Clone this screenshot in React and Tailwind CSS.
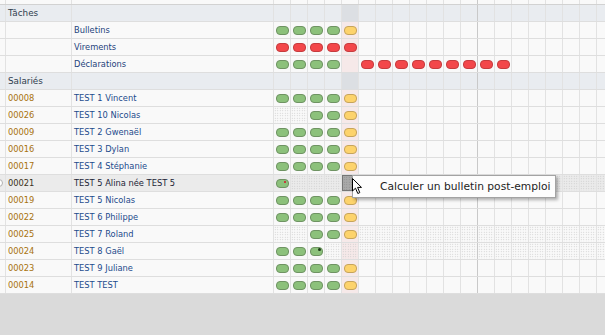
import React from "react";

const NCOL = 20;
const HL = 4;

function fill(prefix, rest) {
  const arr = [...prefix];
  while (arr.length < NCOL) arr.push(rest);
  return arr;
}

const tasks = [
  { name: "Bulletins", cells: fill(["g", "g", "g", "g", "y"], "") },
  { name: "Virements", cells: fill(["r", "r", "r", "r", "r"], "") },
  {
    name: "Déclarations",
    cells: fill(["g", "g", "g", "g", "", "r", "r", "r", "r", "r", "r", "r", "r", "r"], ""),
  },
];

const std = fill(["g", "g", "g", "g", "y"], "");
const emps = [
  { code: "00008", name: "TEST 1 Vincent", cells: std },
  { code: "00026", name: "TEST 10 Nicolas", cells: fill(["h", "h", "g", "g", "y"], "") },
  { code: "00009", name: "TEST 2 Gwenaël", cells: std },
  { code: "00016", name: "TEST 3 Dylan", cells: std },
  { code: "00017", name: "TEST 4 Stéphanie", cells: std },
  { code: "00021", name: "TEST 5 Alina née TEST 5", cells: fill(["gr", "h", "h", "h", "sel"], "h"), active: true },
  { code: "00019", name: "TEST 5 Nicolas", cells: std },
  { code: "00022", name: "TEST 6 Philippe", cells: std },
  { code: "00025", name: "TEST 7 Roland", cells: fill(["h", "h", "g", "g", "y"], "h") },
  { code: "00024", name: "TEST 8 Gaël", cells: fill(["g", "g", "gd", "h", "h"], "h") },
  { code: "00023", name: "TEST 9 Juliane", cells: std },
  { code: "00014", name: "TEST TEST", cells: std },
];

function Pill({ type }) {
  if (type === "y")
    return <div className="w-[13px] h-[9px] rounded-[4px] border border-[#c6a45c] bg-[#fdd36c]" />;
  if (type === "r")
    return <div className="w-[13px] h-[9px] rounded-[4px] border border-[#c53c3e] bg-[#f3474a]" />;
  return (
    <div className="relative w-[13px] h-[9px] rounded-[4px] border border-[#6f9363] bg-[#8cc17b]">
      {type === "gr" && <div className="absolute right-[2px] top-[1px] w-[2px] h-[2px] rounded-full bg-[#d8102a]" />}
      {type === "gd" && <div className="absolute right-[1px] top-[0px] w-[3px] h-[3px] rounded-full bg-[#1d3a18]" />}
    </div>
  );
}

function DayCell({ type, i, group }) {
  const sep = i === 11 ? "border-[#c9c9c9]" : "border-[#e2e2e2]";
  let bg = "";
  if (group) bg = i === HL ? "bg-[#dcdfe3]" : "";
  else if (i === HL) bg = "bg-[#f6e9e9]";
  const hatch = type === "h";
  return (
    <div className={`w-[17px] shrink-0 h-full border-r ${sep} ${bg} flex items-center justify-center`}>
      {hatch && (
        <div className="w-full h-full bg-[radial-gradient(circle,#c8c8c8_0.55px,transparent_0.85px)] bg-[length:2.5px_2.5px]" />
      )}
      {(type === "g" || type === "y" || type === "r" || type === "gr" || type === "gd") && <Pill type={type} />}
      {type === "sel" && (
        <div className="w-[16px] h-[16px] border border-[#767676] bg-[#a9a9a9] bg-[radial-gradient(circle,#8a8a8a_0.55px,transparent_0.85px)] bg-[length:2.5px_2.5px]" />
      )}
    </div>
  );
}

function Row({ group, first, second, cells, codeCls, nameCls, rowBg, radio }) {
  const cs = cells || Array(NCOL).fill("");
  return (
    <div className={`flex h-[17px] border-b border-[#dedede] ${rowBg}`}>
      <div className="w-[6px] shrink-0 border-r border-[#e2e2e2] overflow-hidden flex items-center">
        {radio && <div className="w-[8px] h-[8px] shrink-0 ml-[-5px] rounded-full border border-[#b0b0b0] bg-white" />}
      </div>
      <div className={`w-[66px] shrink-0 border-r border-[#e2e2e2] pl-[2px] pt-[1px] flex items-center whitespace-nowrap ${codeCls}`}>
        {first}
      </div>
      <div className={`w-[202px] shrink-0 border-r border-[#e2e2e2] pl-[2px] pt-[1px] flex items-center whitespace-nowrap ${nameCls}`}>
        {second}
      </div>
      {cs.map((t, i) => (
        <DayCell key={i} type={t} i={i} group={group} />
      ))}
    </div>
  );
}

export default function App() {
  return (
    <div className="relative w-[605px] h-[335px] overflow-hidden bg-[#dadada] font-['DejaVu_Sans',sans-serif] text-[8.3px] leading-none">
      <div className="bg-[#f9f9f9]">
        <div className="flex h-[5px] border-b border-[#d2d2d2]">
          <div className="w-[6px] shrink-0 border-r border-[#e2e2e2]" />
          <div className="w-[66px] shrink-0 border-r border-[#e2e2e2]" />
          <div className="w-[202px] shrink-0 border-r border-[#e2e2e2]" />
          {Array.from({ length: NCOL }).map((_, i) => (
            <div key={i} className={`w-[17px] shrink-0 border-r ${i === 11 ? "border-[#c9c9c9]" : "border-[#e2e2e2]"}`} />
          ))}
        </div>
        <Row group first="Tâches" second="" rowBg="bg-[#e9ecf0]" codeCls="text-[#2f3c4e] text-[8.8px]" />
        {tasks.map((t) => (
          <Row key={t.name} first="" second={t.name} cells={t.cells} nameCls="text-[#24437c]" />
        ))}
        <Row group first="Salariés" second="" rowBg="bg-[#e9ecf0]" codeCls="text-[#2f3c4e] text-[8.8px]" />
        {emps.map((e) => (
          <Row
            key={e.code}
            first={e.code}
            second={e.name}
            cells={e.cells}
            radio={e.active}
            rowBg={e.active ? "bg-[#ebebeb]" : ""}
            codeCls={e.active ? "text-[#3b3320]" : "text-[#a8720e]"}
            nameCls={e.active ? "text-[#1c2436]" : "text-[#1d4b8c]"}
          />
        ))}
      </div>

      <div className="absolute left-[352px] top-[175px] w-[204px] h-[23px] border border-[#a3a3a3] bg-[#fdfdfd] shadow-[2px_2px_3px_rgba(0,0,0,0.3)] flex items-center pl-[27px] pt-[1px] text-[10.7px] text-[#1e1e1e] whitespace-nowrap">
        Calculer un bulletin post-emploi
      </div>

      <svg className="absolute left-[352px] top-[178px]" width="11" height="17" viewBox="0 0 11 17">
        <path d="M0.5 0.5 L0.5 13 L3.5 10.2 L5.8 15.5 L7.8 14.6 L5.6 9.4 L9.5 9.4 Z" fill="#fff" stroke="#000" strokeWidth="1" strokeLinejoin="round" />
      </svg>
    </div>
  );
}
